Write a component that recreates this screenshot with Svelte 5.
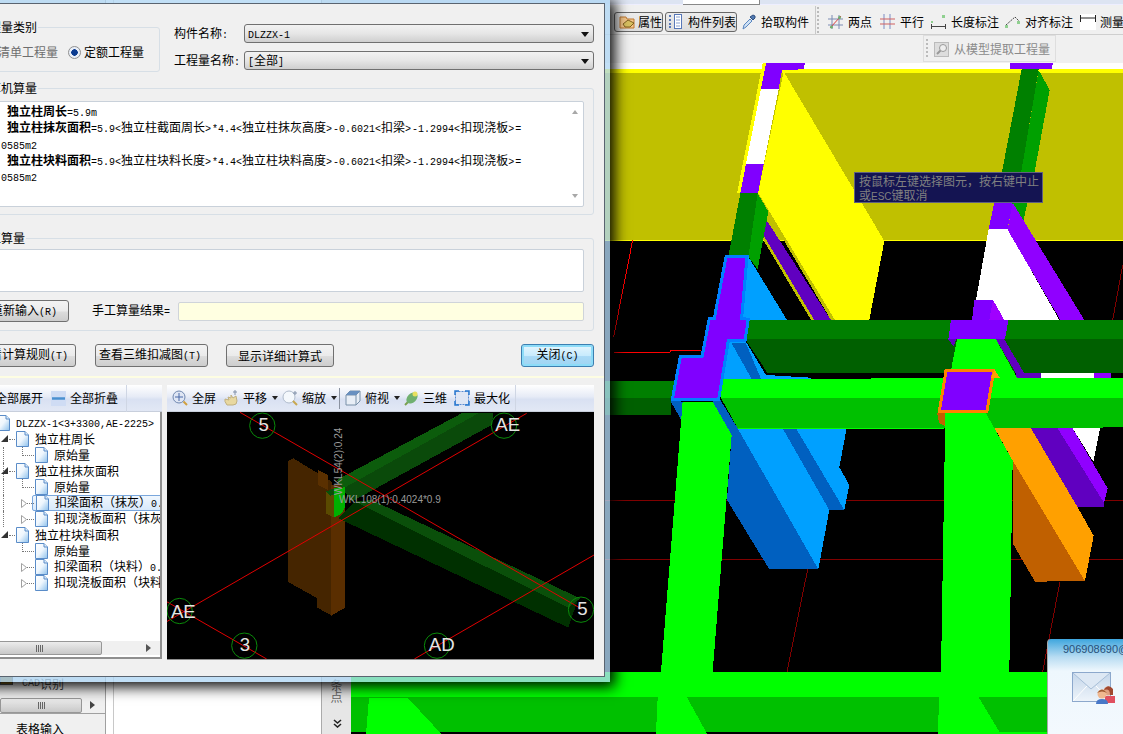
<script>
  const segs = (s) => s.match(/[<>]|[\x00-\x7f]+|[^\x00-\x7f]+/g);
  const calc = [
    { b: '独立柱周长', t: '=5.9m' },
    { b: '独立柱抹灰面积', t: '=5.9<独立柱截面周长>*4.4<独立柱抹灰高度>-0.6021<扣梁>-1.2994<扣现浇板>=' },
    { t: '24.0585m2', flush: true },
    { b: '独立柱块料面积', t: '=5.9<独立柱块料长度>*4.4<独立柱块料高度>-0.6021<扣梁>-1.2994<扣现浇板>=' },
    { t: '24.0585m2', flush: true }
  ];
  const tree = [
    { l: 0, t: 'DLZZX-1<3+3300,AE-2225>' },
    { l: 1, t: '独立柱周长', e: 'open', v: false },
    { l: 2, t: '原始量', v: true, corner: true },
    { l: 1, t: '独立柱抹灰面积', e: 'open', v: true },
    { l: 2, t: '原始量', v: true, corner: true },
    { l: 2, t: '扣梁面积（抹灰）0.6021', e: 'closed', v: true, sel: true },
    { l: 2, t: '扣现浇板面积（抹灰）1.2994', e: 'closed', v: true },
    { l: 1, t: '独立柱块料面积', e: 'open', v: false },
    { l: 2, t: '原始量', corner: true },
    { l: 2, t: '扣梁面积（块料）0.6021', e: 'closed' },
    { l: 2, t: '扣现浇板面积（块料）1.2994', e: 'closed' }
  ];
</script>

{#snippet tx(s)}{#each segs(s) as p}<span class:m={/^[\x00-\x7f]/.test(p)} class:a={p === '<' || p === '>'}>{p}</span>{/each}{/snippet}

{#snippet doc()}
  <svg class="doc" width="13" height="16" viewBox="0 0 13 16">
    <path d="M.5.5H9L12.5 4V15.5H.5Z" fill="url(#docg)" stroke="#5a8cc8" />
    <path d="M9 .5V4H12.5" fill="#dcecfa" stroke="#5a8cc8" />
  </svg>
{/snippet}

{#snippet caret()}
  <svg class="caret" width="6" height="4" viewBox="0 0 6 4"><path d="M0 0H6L3 4Z" fill="#222" /></svg>
{/snippet}

<div class="app">
  <svg class="defs" width="0" height="0">
    <defs>
      <linearGradient id="docg" x1="0" y1="0" x2="1" y2="1"><stop offset="0" stop-color="#fff" /><stop offset=".5" stop-color="#eef6fd" /><stop offset="1" stop-color="#8cc0ec" /></linearGradient>
      <linearGradient id="envg" x1="0" y1="0" x2="0" y2="1"><stop offset="0" stop-color="#c4d6ea" /><stop offset="1" stop-color="#eef4fa" /></linearGradient>
    </defs>
  </svg>

  <aside class="side">
    <div class="side-row"><span class="cad-ico"></span><span class="m">CAD</span>识别</div>
    <div class="side-scroll"><span class="thumb"><i></i></span><span class="arr"></span></div>
    <div class="side-tab">表格输入</div>
  </aside>
  <div class="blank"></div>
  <div class="vpanel">
    <span class="vtext">条</span><span class="vtext">点</span>
    <svg class="chev" width="9" height="9" viewBox="0 0 9 9"><path d="M1 1L4.500 4 8 1M1 5L4.500 8 8 5" fill="none" stroke="#222" stroke-width="1.600" /></svg>
  </div>

  <main class="main">
    <div class="tb0"><span class="tb0-input"></span></div>
    <div class="tb1">
      <div class="check">
        <svg width="16" height="14" viewBox="0 0 16 14"><path d="M1 2H7L8 4H15V13H1Z" fill="#f6c88c" stroke="#c07830" /><path d="M4 9L9 5L15 8L11 12H6Z" fill="#d8c060" stroke="#806020" /></svg>
        <span>属性</span>
      </div>
      <div class="check c2">
        <svg width="14" height="15" viewBox="0 0 14 15"><path d="M1 2H3M1 6H3M1 10H3M1 13H3" stroke="#5878b8" stroke-width="2" stroke-dasharray="2 0" /><rect x="6.500" y=".5" width="7" height="14" fill="#fff" stroke="#5878b8" /><path d="M8 3H12M8 6H12M8 9H12M8 12H12" stroke="#88a0d0" /></svg>
        <span class="g6">构件列表</span>
      </div>
      <div class="ti t-pick">
        <svg width="14" height="16" viewBox="0 0 14 16"><path d="M1 15L2 11L8 5L10 7L4 13Z" fill="#cde0f4" stroke="#5a86c0" /><path d="M8 3L11 6L13 4L13 2L11 1Z" fill="#5078b0" stroke="#305080" /></svg>
        <span>拾取构件</span>
      </div>
      <span class="sep"></span><span class="grip"></span>
      <div class="ti t1">
        <svg width="15" height="16" viewBox="0 0 15 16"><path d="M4 1V15M11 1V15M0 5H15M0 11H15" stroke="#7c8cb4" /><path d="M2 14L13 2" stroke="#d84040" /><circle cx="3.500" cy="13" r="1.500" fill="#70b070" /><circle cx="11.500" cy="3.500" r="1.500" fill="#70b070" /></svg>
        <span>两点</span>
      </div>
      <div class="ti t2">
        <svg width="15" height="15" viewBox="0 0 15 15"><path d="M4 0V15M10 0V15" stroke="#7c8cc4" /><path d="M0 5H15M0 10H15" stroke="#d06060" /></svg>
        <span>平行</span>
      </div>
      <div class="ti t3">
        <svg width="15" height="15" viewBox="0 0 15 15"><rect x="11" y="1" width="3" height="3" fill="#90d090" /><rect x="0" y="7" width="2" height="2" fill="#90d090" /><path d="M.5 10V15M14.500 10V15M1 12.500H14" stroke="#444" /></svg>
        <span>长度标注</span>
      </div>
      <div class="ti t4">
        <svg width="16" height="14" viewBox="0 0 16 14"><path d="M1 10L10 2L14 6" fill="none" stroke="#444" stroke-dasharray="2 1" /><rect x="0" y="10" width="3" height="3" fill="#90d090" /><rect x="12" y="6" width="3" height="3" fill="#90d090" /></svg>
        <span>对齐标注</span>
      </div>
      <div class="ti t5">
        <svg width="16" height="16" viewBox="0 0 16 16"><rect width="16" height="16" fill="#fff" /><path d="M.5 1V8M15.500 1V8M1 4H15" stroke="#222" /></svg>
        <span>测量</span>
      </div>
    </div>
    <div class="tb2">
      <div class="float">
        <span class="grip g2"></span>
        <svg width="15" height="15" viewBox="0 0 15 15"><rect x=".5" y=".5" width="14" height="14" fill="#ddd" stroke="#bbb" /><circle cx="9" cy="6" r="3.500" fill="#eee" stroke="#999" /><path d="M6.500 8.500L3 12" stroke="#999" stroke-width="2" /></svg>
        <span>从模型提取工程量</span>
      </div>
    </div>

    <svg class="scene" width="773" height="671" viewBox="350 63 773 671" shape-rendering="crispEdges">
      <rect x="350" y="63" width="773" height="671" fill="#000" />
      <g transform="translate(610 60) scale(.33333)">
        <rect x="-780" y="10" width="2400" height="18" fill="#fff" />
        <rect x="-780" y="28" width="2400" height="10" fill="#ff0" />
        <rect x="-780" y="38" width="2400" height="502" fill="#c0c000" />
        <rect x="-780" y="540" width="2400" height="3" fill="#ff0" />
        <path d="M65 540L8 830M8 877H178V873H270" stroke="#f00" stroke-width="3" fill="none" />
        <path d="M1535 615L1505 780" stroke="#800000" stroke-width="3" />

        <polygon points="455,10 466,10 398,400 378,400" fill="#ff0" />
        <polygon points="460,470 660,780 610,780 460,530" fill="#6000c0" />
        <polygon points="460,530 610,780 600,780 460,545" fill="#c0c000" />
        <polygon points="441,398 672,780 660,780 441,410" fill="#c0c000" />
        <polygon points="518,35 820,543 775,780 672,780 441,398" fill="#ff0" />
        <polygon points="450,87 503,87 458,312 405,312" fill="#fff" />
        <polygon points="465,10 582,10 578,28 513,30 503,87 450,87" fill="#8000ff" />
        <polygon points="405,312 458,312 441,400 388,400" fill="#8000ff" />
        <polygon points="440,400 472,455 440,628 412,590" fill="#00a000" />
        <polygon points="388,400 440,400 412,590 352,590" fill="#008000" />
        <polygon points="412,590 528,780 365,780" fill="#00a0ff" />

        <polygon points="1197,10 1325,10 1323,28 1197,28" fill="#8000ff" />
        <polygon points="1283,30 1316,90 1270,340 1230,340" fill="#00a000" />
        <polygon points="1232,28 1283,28 1230,340 1172,340" fill="#008000" />
        <polygon points="1250,425 1240,470 1232,515 1200,425" fill="#00a000" />
        <polygon points="1133,507 1190,507 1345,780 1180,780 1146,720 1095,720" fill="#fff" />
        <polygon points="1205,428 1420,780 1348,780 1190,510" fill="#9000ff" />
        <polygon points="1150,428 1205,428 1190,507 1133,507" fill="#8000ff" />
        <polygon points="1146,720 1180,780 1135,780" fill="#a000ff" />
        <polygon points="1090,720 1146,720 1135,780 1083,780" fill="#8000ff" />

        <polygon points="1215,940 1295,940 1295,955 1215,955" fill="#6000c0" />
        <polygon points="1290,940 1450,940 1450,955 1290,955" fill="#fff" />
        <polygon points="1450,940 1500,940 1500,955 1450,955" fill="#9000ff" />

        <polygon points="-780,963 190,963 190,1020 -780,1020" fill="#007f00" />
        <polygon points="415,780 1539,780 1539,838 403,838" fill="#007f00" />
        <polygon points="403,838 1539,838 1539,940 470,940" fill="#006000" />
        <polygon points="350,845 405,845 465,945 632,955 330,960" fill="#00a0ff" />
        <polygon points="362,850 405,850 450,957 422,957" fill="#0060c0" />
        <polygon points="1155,838 1180,838 1240,940 1215,940" fill="#6000c0" />
        <polygon points="1012,838 1035,838 1028,860" fill="#6000c0" />
        <polygon points="1038,838 1155,838 1220,957 1015,957" fill="#0f0" />
        <polygon points="1020,780 1192,780 1182,838 1012,838" fill="#8000ff" />
      </g>

      <g transform="translate(610 390) scale(.33333)">
        <path d="M-780 333H1539M-780 510H1539M590 538L528 845M1347 575L1295 845" stroke="#800000" stroke-width="3" fill="none" />
        <rect x="-780" y="24" width="960" height="51" fill="#006000" />
        <polygon points="362,135 348,330 475,538 622,538 380,115" fill="#0060c0" />
        <polygon points="380,115 515,115 655,360 622,538" fill="#00a0ff" />
        <polygon points="555,115 707,115 685,232 715,285 700,360" fill="#00a0ff" />
        <polygon points="515,115 555,115 700,360 655,360" fill="#0060c0" />
        <polygon points="1340,115 1385,115 1490,295 1478,345" fill="#9000ff" />
        <polygon points="1385,115 1467,115 1447,215" fill="#fff" />
        <polygon points="1260,115 1340,115 1480,340 1478,352 1395,352" fill="#6000c0" />
        <polygon points="1205,212 1422,573 1272,575 1205,460" fill="#c06000" />
        <polygon points="1125,68 1190,115 1260,115 1400,352 1448,437 1422,573 1205,212" fill="#ffa000" />

        <polygon points="330,-33 1539,-37 1539,24 330,24" fill="#0f0" />
        <polygon points="330,24 1539,24 1539,112 1185,115 380,115" fill="#00c000" />
        <rect x="380" y="113" width="620" height="3" fill="#0f0" />

        <polygon points="178,32 215,35 212,92" fill="#0060c0" />
        <polygon points="305,35 328,30 380,115 362,135" fill="#0060c0" />
        <polygon points="978,68 1003,68 1003,108 985,100" fill="#c06000" />
        <polygon points="1003,70 1125,70 1205,212 1195,845 990,845" fill="#0f0" />
        <polygon points="215,35 305,35 362,135 305,845 150,845" fill="#0f0" />

        <rect x="-780" y="845" width="2100" height="77" fill="#0f0" />
        <rect x="-780" y="922" width="2100" height="103" fill="#00c000" />
        <polygon points="-726,924 -609,924 -510,1031 -735,1031" fill="#0f0" />
        <polygon points="140,922 228,922 288,1031 135,1031" fill="#0f0" />
        <polygon points="985,922 1103,922 1165,1025 1310,1025 1310,1031 980,1031" fill="#0f0" />
      </g>

      <g transform="translate(610 60) scale(.33333)">
        <polygon points="345,591 408,591 392,775 412,778 402,842 352,842 323,1018 184,1018 208,891 273,891 295,775 310,775" fill="#8000ff" stroke="#0080ff" stroke-width="9" />
        <polygon points="1005,932 1148,932 1128,1054 985,1054" fill="#8000ff" stroke="#ff8000" stroke-width="9" />
        <polygon points="1150,928 1168,955 1140,955" fill="#ffa000" />
      </g>
    </svg>
  </main>

  <div class="tooltip"><div>按鼠标左键选择图元，按右键中止</div><div>或<span class="esc">ESC</span>键取消</div></div>

  <div class="qq">
    <div class="qq-title">906908690@</div>
    <svg class="env" width="44" height="33" viewBox="0 0 44 33">
      <rect x=".5" y=".5" width="38" height="29" fill="url(#envg)" stroke="#8ca8cc" />
      <path d="M1 1L19 17L38 1" fill="#dde8f4" stroke="#a8bfd8" />
      <path d="M1 29L15 14M38 29L24 14" stroke="#fff" />
      <circle cx="36" cy="19" r="4.500" fill="#e0a080" />
      <path d="M32 18Q36 11 41 17L41 23H38Q38 16 32 18Z" fill="#a04830" />
      <rect x="33" y="24" width="10" height="7" fill="#e05060" />
      <circle cx="30" cy="22" r="4.500" fill="#f0b890" />
      <path d="M25 21Q30 14 35 21Q30 18 25 21Z" fill="#a05830" />
      <path d="M24 32Q24 27 30 27Q36 27 36 32Z" fill="#4878c8" />
    </svg>
  </div>

  <section class="dialog">
    <div class="inner">
      <div class="row-a">
        <div class="group g-type">
          <span class="legend">工程量类别</span>
          <label class="radio off"><span class="dot"></span>清单工程量</label>
          <label class="radio"><span class="dot on"></span>定额工程量</label>
        </div>
        <div class="form">
          <span class="lbl">构件名称<span class="m">:</span></span>
          <div class="combo"><span class="m">DLZZX-1</span></div>
          <span class="lbl">工程量名称<span class="m">:</span></span>
          <div class="combo">{@render tx('[全部]')}</div>
        </div>
      </div>

      <div class="group g-calc">
        <span class="legend">计算机算量</span>
        <div class="box calcbox">
          <div class="calc">
            {#each calc as c}
              <div class:ind={!c.flush}>{#if c.b}<b>{c.b}</b>{/if}{@render tx(c.t)}</div>
            {/each}
          </div>
          <div class="vs"><span class="up"></span><span class="down"></span></div>
        </div>
      </div>

      <div class="group g-hand">
        <span class="legend">手工算量</span>
        <div class="box handbox"></div>
        <div class="handrow">
          <button class="btn retype">{@render tx('重新输入(R)')}</button>
          <span class="res">手工算量结果<span class="m">=</span></span>
          <div class="yellow"></div>
        </div>
      </div>

      <div class="actions">
        <button class="btn b1">{@render tx('查看计算规则(T)')}</button>
        <button class="btn b2">{@render tx('查看三维扣减图(T)')}</button>
        <button class="btn b3">显示详细计算式</button>
        <button class="btn close">{@render tx('关闭(C)')}</button>
      </div>

      <div class="strip"></div>

      <div class="panels">
        <div class="pleft">
          <div class="bar lbar">
            <div class="ti">
              <svg width="15" height="15" viewBox="0 0 15 15"><rect width="15" height="15" fill="#cfdcf4" /><path d="M2 7.500H13M7.500 2V13" stroke="#4a90d0" stroke-width="2" /></svg>
              <span>全部展开</span>
            </div>
            <div class="ti">
              <svg width="15" height="15" viewBox="0 0 15 15"><rect width="15" height="15" fill="#cfdcf4" /><path d="M1 7.500H14" stroke="#4a90d0" stroke-width="2.500" /></svg>
              <span>全部折叠</span>
            </div>
            <span class="bsep"></span>
          </div>
          <div class="treebox">
            <div class="tree">
              {#each tree as n}
                <div class="node-row lv{n.l}">
                  {#if n.v}<i class="vl"></i>{/if}
                  {#if n.l === 1}<i class="hl h1"></i>{/if}
                  {#if n.l === 2 && n.corner}<i class="vl2"></i>{/if}
                  {#if n.l === 2}<i class="hl h2"></i>{/if}
                  {#if n.e === 'open'}<svg class="exp e1" width="7" height="7" viewBox="0 0 7 7"><path d="M7 0V7H0Z" fill="#333" /></svg>{/if}
                  {#if n.e === 'closed'}<svg class="exp e2" width="6" height="9" viewBox="0 0 6 9"><path d="M.5.5L5.500 4.500L.5 8.500Z" fill="#fff" stroke="#a0a0a0" /></svg>{/if}
                  <span class="node" class:sel={n.sel}>{@render doc()}<span class="ntext">{@render tx(n.t)}</span></span>
                </div>
              {/each}
            </div>
            <div class="hs"><span class="thumb t2h"><i></i></span><span class="arr"></span></div>
          </div>
        </div>

        <div class="pright">
          <div class="bar rbar">
            <div class="ti ml0">
              <svg width="16" height="16" viewBox="0 0 16 16"><circle cx="7" cy="7" r="6" fill="#dfe6f4" stroke="#7088b0" /><path d="M7 3V11M3 7H11" stroke="#4868a8" /><path d="M11.500 11.500L15 15" stroke="#d0a040" stroke-width="2" /></svg>
              <span>全屏</span>
            </div>
            <div class="ti ml8">
              <svg width="15" height="16" viewBox="0 0 15 16"><path d="M3 15Q0 11 1 9L5 10L4 7L7 8V5L9 8L12 6L13 11Q13 15 9 15Z" fill="#e8d8a0" stroke="#c0b080" /><path d="M11 0V5M9 2H13" stroke="#8090a8" /></svg>
              <span>平移</span>{@render caret()}
            </div>
            <div class="ti ml4">
              <svg width="16" height="16" viewBox="0 0 16 16"><circle cx="7" cy="7" r="6" fill="#f4f8fc" stroke="#b0bccc" /><path d="M11 11L15 15" stroke="#c8a850" stroke-width="2" /><path d="M13 1V5M11 3H15" stroke="#8090a8" /></svg>
              <span>缩放</span>{@render caret()}
            </div>
            <span class="vsep"></span>
            <div class="ti ml5">
              <svg width="16" height="16" viewBox="0 0 16 16"><path d="M1 5L5 1H15V11L11 15H1Z" fill="#e8eef6" stroke="#7890a8" /><path d="M1 5H11V15M11 5L15 1" fill="none" stroke="#7890a8" /><path d="M1 5L5 1H15L11 5Z" fill="#6890c0" /></svg>
              <span>俯视</span>{@render caret()}
            </div>
            <div class="ti ml4">
              <svg width="15" height="16" viewBox="0 0 15 16"><path d="M1 15L4 12" stroke="#7aa050" stroke-width="2" /><ellipse cx="8" cy="8" rx="4.500" ry="6.500" transform="rotate(45 8 8)" fill="#70b070" /><circle cx="11" cy="4" r="2.500" fill="#e8e060" /></svg>
              <span>三维</span>
            </div>
            <div class="ti ml7">
              <svg width="16" height="16" viewBox="0 0 16 16"><rect x="1.500" y="1.500" width="13" height="13" fill="#dfe6f4" stroke="#5a8ad0" stroke-dasharray="2 1" /><path d="M1 5V1H5M11 1H15V5M15 11V15H11M5 15H1V11" fill="none" stroke="#2878d0" stroke-width="1.500" /></svg>
              <span>最大化</span>
            </div>
            <span class="bsep r"></span>
          </div>
          <svg class="view" width="427" height="247" viewBox="6 81 1281 741">
            <rect x="6" y="81" width="1281" height="741" fill="#000" />
            <g shape-rendering="crispEdges">
              <polygon points="368,228 385,220 500,290 500,692 457,668 457,640 368,590" fill="#452500" />
              <polygon points="498,300 540,300 540,668 498,692" fill="#5a2e00" />
              <polygon points="458,255 490,270 490,315 458,300" fill="#5a3000" />
              <polygon points="515,285 890,85 985,85 980,120 560,350" fill="#0a4a0a" />
              <polygon points="515,285 890,85 940,85 535,310" fill="#0c5c0c" />
              <polygon points="520,400 570,350 1240,640 1210,728" fill="#003000" />
              <polygon points="570,350 620,345 1245,640 1210,668" fill="#0a4f0a" />
              <polygon points="483,320 507,310 507,398 483,385" fill="#5a4a00" />
              <polygon points="483,320 507,310 520,325 495,332" fill="#0a4f0a" />
              <polygon points="507,310 540,307 540,365 530,385 507,398" fill="#00b000" />
            </g>
            <g fill="none" stroke="#e00000" stroke-width="3">
              <path d="M225 82L1250 672" />
              <path d="M1085 85L5 710" />
              <path d="M5 650L305 822" />
              <path d="M748 822L1287 510" />
            </g>
            <g fill="none" stroke="#0a8a0a" stroke-width="3">
              <circle cx="292" cy="122" r="38" />
              <circle cx="1017" cy="122" r="38" />
              <circle cx="44" cy="678" r="38" />
              <circle cx="238" cy="782" r="38" />
              <circle cx="816" cy="782" r="38" />
              <circle cx="1248" cy="674" r="38" />
            </g>
            <g class="vl-text" text-anchor="middle">
              <text x="296" y="138">5</text>
              <text x="1028" y="138">AE</text>
              <text x="55" y="698">AE</text>
              <text x="240" y="798">3</text>
              <text x="830" y="798">AD</text>
              <text x="1252" y="690">5</text>
            </g>
            <text class="small" transform="translate(530 330) rotate(-90)">WKL54(2):0.24</text>
            <text class="small" x="522" y="355">WKL108(1):0.4024*0.9</text>
          </svg>
        </div>
      </div>
    </div>
  </section>
</div>

<style>
  :global(body) { margin: 0; background: #fff; }
  .app {
    position: relative;
    width: 1123px;
    height: 734px;
    overflow: hidden;
    display: flex;
    font: 12px/14px "Noto Sans CJK SC", "Liberation Sans", sans-serif;
    color: #000;
    background: #fff;
  }
  .defs { position: absolute; }
  .m { font-family: "Liberation Mono", monospace; font-size: 10px; }
  .a { font-family: "Liberation Mono", monospace; font-size: 10px; }

  .side {
    width: 105px;
    flex: none;
    background: #f0f0f0;
    border-right: 1px solid #a0a0a0;
    display: flex;
    flex-direction: column;
    justify-content: flex-end;
  }
  .side-row { height: 16px; padding: 0 0 6px 22px; display: flex; align-items: center; color: #444; position: relative; }
  .cad-ico { position: absolute; left: 0; top: 0; width: 13px; height: 9px; background: #8a6a20; border: 1px solid #555; box-sizing: border-box; }
  .side-scroll { height: 15px; display: flex; border-bottom: 1px solid #a0a0a0; }
  .side-scroll .thumb { width: 82px; }
  .side-tab { height: 20px; padding-left: 16px; line-height: 29px; }
  .thumb {
    display: flex;
    align-items: center;
    justify-content: center;
    background: linear-gradient(#ececec, #c8c8c8);
    border: 1px solid #979797;
    border-radius: 2px;
    box-sizing: border-box;
  }
  .thumb i { width: 7px; height: 7px; background: repeating-linear-gradient(90deg, #666 0 1px, transparent 1px 2px); }
  .arr { width: 0; height: 0; margin: 3px 0 0 8px; border: 4px solid transparent; border-left: 5px solid #444; border-right: 0; }

  .blank { flex: none; border-left: 1px solid #c8c8c8; box-sizing: border-box; margin-left: 7px; width: 208px; }
  .vpanel {
    width: 30px;
    flex: none;
    box-sizing: border-box;
    background: #e6e6e6;
    border-left: 1px solid #aaa;
    display: flex;
    flex-direction: column;
    align-items: center;
    justify-content: flex-end;
    padding-bottom: 6px;
    color: #666;
  }
  .vtext { height: 12px; line-height: 12px; }
  .vtext + .vtext { margin-bottom: 16px; }
  .chev { margin-left: 2px; }

  .main { width: 773px; flex: none; display: flex; flex-direction: column; }
  .tb0 { height: 5px; background: #dde4f2; padding-left: 332px; border-bottom: 1px solid #eef; box-sizing: border-box; }
  .tb0-input { display: block; width: 76px; height: 4px; background: #fff; border: solid #888; border-width: 0 1px 1px 0; }
  .tb1 {
    height: 30px;
    box-sizing: border-box;
    background: #f0f0f0;
    border-bottom: 1px solid #cfcfcf;
    display: flex;
    align-items: center;
    padding: 4px 0 0 263px;
    white-space: nowrap;
  }
  .ti { display: flex; align-items: center; gap: 4px; white-space: nowrap; }
  .check {
    height: 20px;
    width: 50px;
    box-sizing: border-box;
    display: flex;
    align-items: center;
    gap: 3px;
    padding-left: 4px;
    background: linear-gradient(#ececec, #dcdcdc);
    border: 1px solid #686868;
    border-radius: 3px;
  }
  .check.c2 { width: 73px; margin-left: 2px; padding-left: 2px; gap: 4px; }
  .g6 { margin-left: 2px; }
  .t-pick { margin-left: 5px; gap: 5px; }
  .sep { width: 1px; height: 28px; margin-top: -4px; background: #c8c8c8; margin-left: 6px; }
  .grip { width: 2px; height: 26px; margin-left: 1px; margin-top: -4px; background: repeating-linear-gradient(#bbb 0 2px, transparent 2px 4px); }
  .t1 { margin-left: 9px; gap: 5px; }
  .t2 { margin-left: 8px; gap: 5px; }
  .t3 { margin-left: 7px; gap: 5px; }
  .t4 { margin-left: 6px; gap: 4px; }
  .t5 { margin-left: 7px; gap: 4px; }
  .tb2 { height: 28px; background: #f0f0f0; padding-left: 572px; box-sizing: border-box; }
  .float {
    width: 133px;
    height: 27px;
    box-sizing: border-box;
    display: flex;
    align-items: center;
    gap: 5px;
    border: 1px solid #dedede;
    padding: 1px 0 0 2px;
    color: #8a8a8a;
    white-space: nowrap;
  }
  .g2 { height: 20px; margin: -1px 1px 0 0; }
  .scene { display: block; }

  .tooltip {
    position: absolute;
    left: 854px;
    top: 172px;
    width: 189px;
    height: 31px;
    box-sizing: border-box;
    padding: 1px 4px;
    line-height: 14px;
    background: #141452;
    border: 1px solid #606080;
    color: #808080;
    white-space: nowrap;
  }
  .esc { font: 10px "Liberation Sans", sans-serif; }

  .qq {
    position: absolute;
    left: 1047px;
    top: 639px;
    width: 76px;
    height: 95px;
    box-sizing: border-box;
    border-left: 1px solid #a8a8a8;
    border-top-left-radius: 4px;
    background: linear-gradient(#3ea6de 0, #b8dcf2 18px, #eef7fd 32px, #f3f9fe 100%);
    overflow: hidden;
  }
  .qq-title { padding: 3px 0 0 15px; font: 11px/15px "Liberation Sans", sans-serif; color: #274f78; white-space: nowrap; }
  .env { display: block; margin: 15px 0 0 24px; }

  .dialog {
    position: absolute;
    left: -30px;
    top: 0;
    width: 640px;
    height: 682px;
    box-sizing: border-box;
    border: solid rgba(176, 214, 244, .78);
    border-width: 3px 5px 5px 0;
    box-shadow: 3px 3px 13px 2px rgba(0, 0, 0, .95);
  }
  .inner {
    height: 100%;
    box-sizing: border-box;
    background: #f0f0f0;
    border: 1px solid #5a6470;
    border-left: 0;
    padding: 0 10px 0 6px;
    display: flex;
    flex-direction: column;
  }
  .row-a { margin-top: 20px; height: 48px; display: grid; grid-template-columns: 184px 420px; column-gap: 14px; }
  .group { position: relative; box-sizing: border-box; border: 1px solid #d7dfe6; border-radius: 3px; }
  .legend { position: absolute; left: -1px; top: -8px; padding: 0 1px; line-height: 14px; background: #f0f0f0; white-space: nowrap; }
  .g-type { margin-top: 3px; height: 45px; display: flex; align-items: center; padding: 5px 0 0 7px; gap: 10px; white-space: nowrap; }
  .radio { display: flex; align-items: center; gap: 3px; }
  .radio.off { color: #6e6e6e; gap: 1px; }
  .dot { width: 13px; height: 13px; box-sizing: border-box; border: 1px solid #909090; border-radius: 50%; background: #f4f4f4; }
  .dot.on { background: radial-gradient(circle, #0a3a90 0 3px, #e8eef8 3.500px); }
  .form { display: grid; grid-template-columns: 70px 350px; grid-auto-rows: 19px; row-gap: 8px; align-items: center; }
  .lbl { white-space: nowrap; padding-top: 2px; }
  .combo {
    height: 19px;
    box-sizing: border-box;
    border: 1px solid #707070;
    border-radius: 3px;
    background: linear-gradient(#f2f2f2, #e6e6e6 50%, #cfcfcf);
    padding-left: 3px;
    line-height: 16px;
    position: relative;
  }
  .combo::after {
    content: "";
    position: absolute;
    right: 4px;
    top: 7px;
    border: 4px solid transparent;
    border-top: 5px solid #111;
    border-bottom: 0;
  }

  .g-calc { margin-top: 16px; height: 127px; padding: 12px 9px 7px 2px; }
  .box { background: #fff; border: 1px solid #c9d1da; border-radius: 2px; box-sizing: border-box; }
  .calcbox { height: 106px; display: flex; }
  .calc { flex: 1; padding: 1px 0 0 3px; line-height: 16.300px; white-space: nowrap; overflow: hidden; }
  .calc div { height: 16.300px; }
  .ind { padding-left: 24px; }
  .calc .a { display: inline-block; width: 7px; }
  .vs { width: 16px; display: flex; flex-direction: column; justify-content: space-between; align-items: center; padding: 8px 0 8px; box-sizing: border-box; }
  .up { border: 3px solid transparent; border-bottom: 4px solid #a8a8a8; border-top: 0; }
  .down { border: 3px solid transparent; border-top: 4px solid #a8a8a8; border-bottom: 0; }

  .g-hand { margin-top: 23px; height: 93px; padding: 10px 9px 0 2px; }
  .handbox { height: 43px; }
  .handrow { margin-top: 8px; display: flex; align-items: center; height: 22px; }
  .btn {
    box-sizing: border-box;
    height: 22px;
    padding: 0;
    font: inherit;
    color: #000;
    border: 1px solid #707070;
    border-radius: 3px;
    background: linear-gradient(#f3f3f3, #ebebeb 50%, #dcdcdc 55%, #cdcdcd);
    white-space: nowrap;
  }
  .retype { width: 90px; flex: none; }
  .res { margin-left: 23px; white-space: nowrap; }
  .yellow { margin-left: 8px; flex: 1; height: 19px; box-sizing: border-box; background: #ffffe1; border: 1px solid #cfd4da; border-radius: 2px; }

  .actions { margin-top: 13px; height: 23px; display: flex; }
  .actions .btn { height: 23px; }
  .b1 { width: 100px; padding-right: 6px; flex: none; }
  .b2 { width: 113px; padding-right: 3px; margin-left: 19px; flex: none; }
  .b3 { width: 108px; margin-left: 18px; flex: none; }
  .close {
    width: 73px;
    margin-left: auto;
    flex: none;
    border-color: #3c7fb1;
    box-shadow: inset 0 0 0 2px #8ddcf8;
    background: linear-gradient(#e6f6fd, #c8ebfd 50%, #a9daf6 55%, #a0d4f2);
  }

  .strip { margin: 9px -10px 0 -6px; height: 2px; background: #fdfde2; flex: none; }
  .panels { margin-top: 7px; height: 274px; display: grid; grid-template-columns: 186px 427px; column-gap: 5px; }
  .bar {
    height: 27px;
    box-sizing: border-box;
    display: flex;
    align-items: center;
    background: linear-gradient(#fff, #e6ebf6 45%, #d9e1f2 55%, #e2e8f5);
    border-bottom: 1px solid #c8cfdc;
    white-space: nowrap;
  }
  .lbar { padding-left: 0; gap: 8px; position: relative; }
  .lbar .ti { gap: 4px; }
  .bsep { width: 1px; height: 27px; background: #cfd6e4; }
  .lbar .bsep { margin-left: 0; }
  .pleft { display: flex; flex-direction: column; min-width: 0; }
  .treebox {
    height: 247px;
    background: #fff;
    border: solid #8f8f8f;
    border-width: 0 2px 2px 0;
    box-sizing: border-box;
    display: flex;
    flex-direction: column;
    overflow: hidden;
  }
  .tree { height: 229px; padding-top: 3px; box-sizing: border-box; }
  .node-row { position: relative; height: 16px; white-space: nowrap; overflow: hidden; display: flex; align-items: center; }
  .lv0 { padding-left: 21px; }
  .lv1 { padding-left: 40px; }
  .lv2 { padding-left: 59px; }
  .node { display: inline-flex; align-items: center; gap: 6px; height: 16px; }
  .doc { flex: none; }
  .node.sel {
    margin-left: -3px;
    padding-left: 3px;
    height: 14px;
    width: 200px;
    border: 1px solid #7aa7dc;
    border-radius: 2px;
    background: linear-gradient(#f0f7fe, #d8e9fb);
  }
  .vl { position: absolute; left: 27px; top: 0; height: 16px; border-left: 1px dotted #777; }
  .vl2 { position: absolute; left: 46px; top: 0; height: 9px; border-left: 1px dotted #777; }
  .hl { position: absolute; top: 8px; border-top: 1px dotted #777; }
  .h1 { left: 33px; width: 6px; }
  .h2 { left: 47px; width: 11px; }
  .exp { position: absolute; }
  .e1 { left: 25px; top: 4px; }
  .e2 { left: 45px; top: 4px; background: #fff; }
  .hs { height: 14px; display: flex; background: #f0f0f0; }
  .hs .t2h { width: 126px; }
  .hs .arr { margin: 3px 0 0 44px; border-left-color: #555; }

  .pright { display: flex; flex-direction: column; }
  .rbar { padding-left: 5px; }
  .ml0 { margin-left: 0; }
  .ml4 { margin-left: 4px; }
  .ml5 { margin-left: 5px; }
  .ml7 { margin-left: 7px; }
  .ml8 { margin-left: 8px; }
  .caret { margin-left: 1px; }
  .vsep { width: 1px; height: 21px; margin-left: 2px; background: #8a92a0; }
  .bsep.r { margin-left: 5px; }
  .view { display: block; border-bottom: 1px solid #8f8f8f; box-sizing: content-box; }
  .vl-text text { font: 56px "Liberation Sans", sans-serif; fill: #e4e4e4; }
  .small { font: 30px "Liberation Sans", sans-serif; fill: #9a9a9a; }
</style>
